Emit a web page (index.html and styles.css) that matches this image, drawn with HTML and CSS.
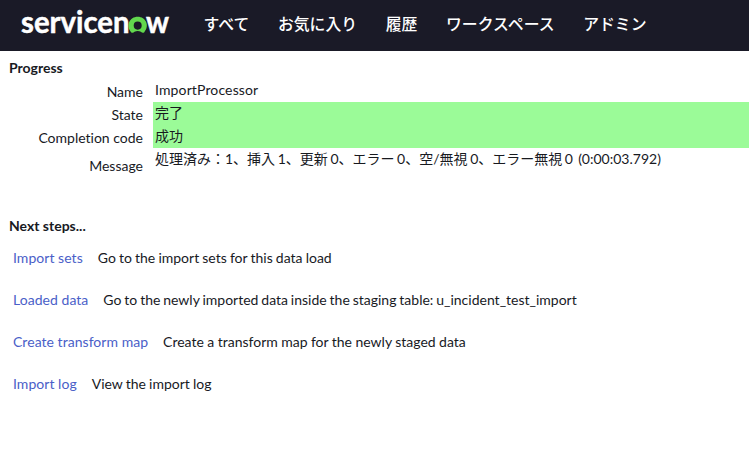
FILE: index.html
```html
<!DOCTYPE html>
<html lang="ja">
<head>
<meta charset="utf-8">
<title>Progress</title>
<link rel="stylesheet" href="styles.css">
</head>
<body>
<header class="topbar">
  <svg class="logo" width="150" height="43" viewBox="0 -4 150 43" role="img" aria-label="servicenow">
    <text class="wordmark" x="0" y="23.9" textLength="108.5" lengthAdjust="spacingAndGlyphs">servicen</text>
    <text class="wordmark" x="125" y="23.9" textLength="23" lengthAdjust="spacingAndGlyphs">w</text>
    <path class="ring" d="M113.5 22.8Q112 24.4 110.3 23.4C104.3 16.6 108.6 7.8 116.7 7.8S129.1 16.6 123.1 23.4Q121.4 24.4 119.9 22.8Q116.7 21.3 113.5 22.8ZM116.7 12.5A4 4.1 0 1 0 116.7 20.7A4 4.1 0 1 0 116.7 12.5Z"/>
  </svg>
  <nav class="menu">
    <a>すべて</a><a>お気に入り</a><a>履歴</a><a>ワークスペース</a><a>アドミン</a>
  </nav>
</header>
<main>
  <h2>Progress</h2>
  <dl class="progress">
    <dt>Name</dt><dd class="name">ImportProcessor</dd>
    <dt>State</dt><dd class="ok">完了</dd>
    <dt>Completion code</dt><dd class="ok">成功</dd>
    <dt class="message">Message</dt><dd class="result">処理済み：1、挿入 1、更新 0、エラー 0、空/無視 0、エラー無視 0 &nbsp;(0:00:03.792)</dd>
  </dl>
  <h2>Next steps...</h2>
  <ul class="steps">
    <li><a>Import sets</a><span>Go to the import sets for this data load</span></li>
    <li><a>Loaded data</a><span>Go to the newly imported data inside the staging table: u_incident_test_import</span></li>
    <li><a>Create transform map</a><span>Create a transform map for the newly staged data</span></li>
    <li><a>Import log</a><span>View the import log</span></li>
  </ul>
</main>
</body>
</html>
```
FILE: styles.css
```css
body {
  margin: 0;
  background: #fff;
  color: #181a1f;
  font: 14px/20px Lato, "Noto Sans CJK JP", sans-serif;
  font-variant-ligatures: none;
  overflow: hidden;
}
.topbar {
  height: 51px;
  display: flex;
  background: #1a1a27;
  color: #fff;
}
.logo {
  flex: none;
  margin: 5px 0 0 21px;
  overflow: visible;
}
.wordmark {
  font: 700 30px Lato, sans-serif;
  fill: #fff;
  stroke: #fff;
  stroke-width: 0.5px;
}
.ring {
  fill: #62d84e;
  fill-rule: evenodd;
}
.menu {
  display: flex;
  gap: 28.6px;
  margin-left: 32.5px;
  font: 500 15.85px/48px "Noto Sans CJK JP", sans-serif;
  white-space: nowrap;
}
h2 {
  margin: 0;
  padding: 7px 9px 0;
  font-size: 14px;
  line-height: 20px;
  font-weight: 700;
}
.progress {
  display: grid;
  grid-template-columns: 143px 1fr;
  grid-template-rows: 24px 23px 23px 61px;
  column-gap: 10px;
  margin: 0;
}
dt {
  text-align: right;
  padding-top: 3px;
}
dt:first-child {
  padding-top: 4px;
}
dt.message {
  padding-top: 8px;
}
dd {
  margin: 0;
  padding: 1px 0 0 2px;
  line-height: 20px;
  white-space: nowrap;
}
dd.name {
  padding-top: 2px;
  letter-spacing: 0.13px;
}
dd.result {
  word-spacing: -1px;
}
dd.ok {
  background: #9bfb98;
}
.steps {
  margin: 12px 0 0;
  padding: 0 13px;
  list-style: none;
}
.steps li {
  display: flex;
  gap: 15px;
  height: 42px;
  white-space: nowrap;
}
.steps a {
  color: #4a60c8;
  letter-spacing: 0.04px;
}
.steps span {
  word-spacing: -0.45px;
}
.steps li:nth-child(2) span {
  word-spacing: -0.7px;
}
.steps li:nth-child(3) span {
  word-spacing: -0.15px;
}
```
